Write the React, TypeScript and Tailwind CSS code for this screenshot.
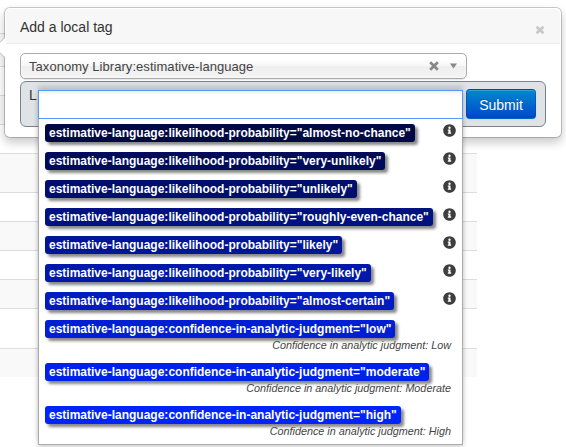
import React from "react";

const tags = [
  { value: 'likelihood-probability="almost-no-chance"', bg: "bg-[#000944]", w: "w-[370px]" },
  { value: 'likelihood-probability="very-unlikely"', bg: "bg-[#000c59]", w: "w-[340px]" },
  { value: 'likelihood-probability="unlikely"', bg: "bg-[#000f6d]", w: "w-[312px]" },
  { value: 'likelihood-probability="roughly-even-chance"', bg: "bg-[#001282]", w: "w-[388px]" },
  { value: 'likelihood-probability="likely"', bg: "bg-[#001597]", w: "w-[297px]" },
  { value: 'likelihood-probability="very-likely"', bg: "bg-[#0018ac]", w: "w-[326px]" },
  { value: 'likelihood-probability="almost-certain"', bg: "bg-[#001bc1]", w: "w-[349px]" },
  { value: 'confidence-in-analytic-judgment="low"', bg: "bg-[#001ed6]", w: "w-[350px]", note: "Low" },
  { value: 'confidence-in-analytic-judgment="moderate"', bg: "bg-[#0021ea]", w: "w-[384px]", note: "Moderate" },
  { value: 'confidence-in-analytic-judgment="high"', bg: "bg-[#0024ff]", w: "w-[356px]", note: "High" },
];

const rows = [
  "h-[33px] bg-[#f9f9f9]",
  "h-[29px]",
  "h-[29px] bg-[#f9f9f9]",
  "h-[29px]",
  "h-[39px] bg-[#f9f9f9]",
  "h-[29px]",
  "h-[29px] bg-[#f9f9f9]",
  "h-[29px]",
  "h-[29px] bg-[#f9f9f9]",
  "h-[40px]",
  "h-[29px] bg-[#f9f9f9]",
];

function InfoIcon() {
  return (
    <svg className="size-[13px]" viewBox="0 0 512 512" fill="#3e3e3e">
      <path d="M256 8C119 8 8 119 8 256s111 248 248 248 248-111 248-248S393 8 256 8zm0 92a46 46 0 1 1 0 92 46 46 0 0 1 0-92zm66 276c0 7-5 12-12 12H202c-7 0-12-5-12-12v-28c0-7 5-12 12-12h14v-68h-14c-7 0-12-5-12-12v-28c0-7 5-12 12-12h82c7 0 12 5 12 12v108h14c7 0 12 5 12 12z" />
    </svg>
  );
}

export default function App() {
  return (
    <div className="relative h-[447px] w-[566px] overflow-hidden bg-white font-['Liberation_Sans',Arial,sans-serif] text-[14px] text-[#333]">
      <div className="w-[477px] pt-[33px]">
        {rows.map((r, i) => (
          <div key={i} className={`border-t border-[#ddd] ${r}`} />
        ))}
      </div>

      <div className="absolute left-[4px] top-[7px] h-[131px] w-[558px] rounded-[6px] border border-black/20 bg-white bg-clip-padding p-px shadow-[0_5px_10px_rgba(0,0,0,0.2)]">
        <svg className="absolute -left-[5px] top-[28px]" width="6" height="24" viewBox="0 0 6 24">
          <path d="M6 1 0 7V16L6 22Z" fill="#fff" />
          <path d="M5 1 0 6.5M0 17 5 22.5" stroke="#c4c4c4" fill="none" />
        </svg>
        <div className="flex h-[35px] justify-between rounded-t-[5px] border-b border-[#ebebeb] bg-[#f7f7f7] pl-[14px] pr-[15px]">
          <span className="pt-[9px] leading-[18px]">Add a local tag</span>
          <svg className="mt-[17px]" width="10" height="8" viewBox="0 0 10 8">
            <path d="m1.5.7 7 6.6m0-6.6-7 6.6" stroke="#c8c8c8" strokeWidth="2.7" />
          </svg>
        </div>
        <div className="pl-[14px] pt-[9px]">
          <div className="flex h-[26px] w-[447px] items-center rounded-[5px] border border-[#aaa] bg-[linear-gradient(#fff_20%,#f6f6f6_50%,#eee_52%,#f4f4f4_100%)] pl-[8px] pr-[9px] text-[13px] text-[#444] shadow-[inset_0_0_3px_#fff,0_1px_1px_rgba(0,0,0,0.1)]">
            <span className="flex-1 pt-px leading-[24px] tracking-[0.05px]">Taxonomy Library:estimative-language</span>
            <svg width="10" height="10" viewBox="0 0 10 10">
              <path d="m1.2 1.2 7.6 7.6m0-7.6L1.2 8.8" stroke="#888" strokeWidth="2.7" />
            </svg>
            <svg className="ml-[11px]" width="7" height="6" viewBox="0 0 7 6">
              <path d="M0 .5h7L3.5 5.5z" fill="#888" />
            </svg>
          </div>
          <div className="mt-[2px] flex h-[46px] w-[526px] justify-between rounded-[6px] border border-[#78838c] bg-[#dfe3e6] pl-[8px] pr-[9px] pt-[7px]">
            <span className="h-[14px] leading-[12px]">L</span>
            <button className="h-[30px] w-[70px] rounded-[4px] border border-[#0044aa]/50 bg-linear-to-b from-[#0088cc] to-[#0044cc] pt-px text-[14px] leading-[20px] text-white shadow-[inset_0_1px_0_rgba(255,255,255,0.2),0_1px_2px_rgba(0,0,0,0.05)] [text-shadow:0_-1px_0_rgba(0,0,0,0.25)]">
              Submit
            </button>
          </div>
        </div>
      </div>

      <div className="absolute left-[38px] top-[90px] h-[355px] w-[425px] border border-[#aaa] bg-white shadow-[0_4px_5px_rgba(0,0,0,0.15),0_-4px_5px_rgba(0,0,0,0.15)]">
        <div className="-mx-px -mt-px h-[29px] border border-[#5897fb] bg-[linear-gradient(#eee_1%,#fff_15%)]" />
        <ul className="pl-[6px] pr-[6px] pt-[5px] leading-none">
          {tags.map((t) => (
            <li key={t.value} className={t.note ? "h-[43px]" : "h-[28px]"}>
              <div className="flex items-start justify-between">
                <span
                  className={`block h-[18px] whitespace-nowrap rounded-[3px] px-[4px] text-[12px] font-bold leading-[18px] text-white shadow-[3px_3px_3px_#888] ${t.bg} ${t.w}`}
                >
                  estimative-language:{t.value}
                </span>
                {!t.note && <InfoIcon />}
              </div>
              {t.note && (
                <div className="pr-[5px] pt-px text-right text-[10.8px] italic leading-[12px] text-[#444]">
                  Confidence in analytic judgment: {t.note}
                </div>
              )}
            </li>
          ))}
        </ul>
      </div>
    </div>
  );
}
